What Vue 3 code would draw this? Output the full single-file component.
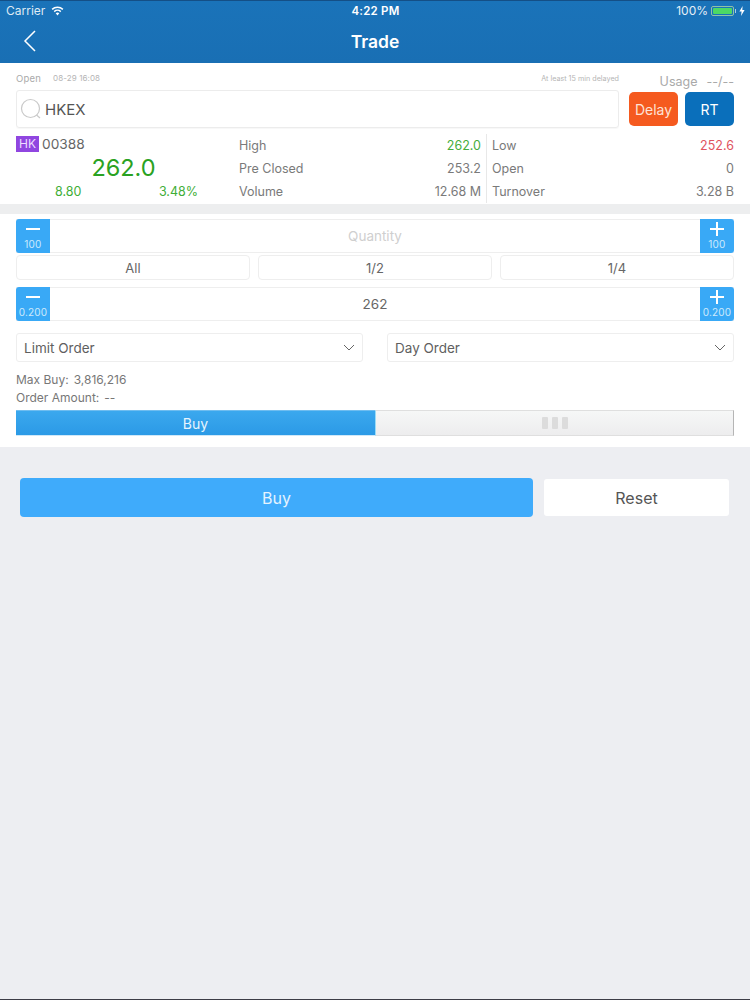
<script setup>
const stats = [
  [{ l: 'High', v: '262.0', c: 'up' }, { l: 'Low', v: '252.6', c: 'down' }],
  [{ l: 'Pre Closed', v: '253.2', c: '' }, { l: 'Open', v: '0', c: '' }],
  [{ l: 'Volume', v: '12.68 M', c: '' }, { l: 'Turnover', v: '3.28 B', c: '' }],
]
</script>

<template>
  <div class="page">
    <header class="top">
      <div class="status">
        <div class="st-left">
          <span>Carrier</span>
          <svg width="13" height="10" viewBox="0 0 15 11"><path d="M7.5 10.6 L9.6 8.1 A3.2 3.2 0 0 0 5.4 8.1 Z" fill="#fff"/><path d="M3.7 6.2 A5.6 5.6 0 0 1 11.3 6.2" fill="none" stroke="#fff" stroke-width="1.7"/><path d="M1.3 3.6 A9 9 0 0 1 13.7 3.6" fill="none" stroke="#fff" stroke-width="1.7"/></svg>
        </div>
        <div class="st-time">4:22 PM</div>
        <div class="st-right">
          <span>100%</span>
          <span class="batt"><i></i></span>
          <span class="nub"></span>
          <svg width="6" height="10" viewBox="0 0 6 10"><path d="M3.6 0 L0.4 5.6 H2.6 L2 10 L5.6 4 H3.3 Z" fill="#fff"/></svg>
        </div>
      </div>
      <div class="nav">
        <svg class="back" width="14" height="22" viewBox="0 0 14 22"><path d="M12 1 L2 11 L12 21" fill="none" stroke="#fff" stroke-width="1.5"/></svg>
        <div class="title">Trade</div>
      </div>
    </header>

    <section class="quote">
      <div class="search-col">
        <div class="meta">
          <span class="open">Open</span>
          <span class="tiny date">08-29 16:08</span>
          <span class="tiny delayed">At least 15 min delayed</span>
        </div>
        <div class="search">
          <svg width="22" height="22" viewBox="0 0 22 22"><circle cx="10.5" cy="10.5" r="9" fill="none" stroke="#c9c9c9" stroke-width="1.2"/><path d="M16.5 17 L20 20" stroke="#c9c9c9" stroke-width="1.2"/></svg>
          <span>HKEX</span>
        </div>
      </div>
      <div class="side-col">
        <div class="usage"><span>Usage</span><span>--/--</span></div>
        <div class="modes">
          <button class="mode delay">Delay</button>
          <button class="mode rt">RT</button>
        </div>
      </div>
    </section>

    <section class="prices">
      <div class="stock">
        <div class="code"><span class="tag">HK</span><span>00388</span></div>
        <div class="last">262.0</div>
        <div class="chg"><span>8.80</span><span>3.48%</span></div>
      </div>
      <div class="grid">
        <div v-for="(row, i) in stats" :key="i" class="grid-row">
          <div v-for="(cell, j) in row" :key="j" class="cell" :class="'col' + j">
            <span>{{ cell.l }}</span>
            <span :class="cell.c">{{ cell.v }}</span>
          </div>
        </div>
      </div>
    </section>

    <div class="sep"></div>

    <section class="form">
      <div class="stepper">
        <button class="step left"><span class="sym minus"></span><small>100</small></button>
        <div class="val placeholder">Quantity</div>
        <button class="step right"><span class="sym plus"></span><small>100</small></button>
      </div>
      <div class="fractions">
        <button>All</button>
        <button>1/2</button>
        <button>1/4</button>
      </div>
      <div class="stepper price">
        <button class="step left"><span class="sym minus"></span><small>0.200</small></button>
        <div class="val">262</div>
        <button class="step right"><span class="sym plus"></span><small>0.200</small></button>
      </div>
      <div class="selects">
        <div class="select first">
          <span>Limit Order</span>
          <svg width="12" height="7" viewBox="0 0 12 7"><path d="M1 1 L6 6 L11 1" fill="none" stroke="#666" stroke-width="1"/></svg>
        </div>
        <div class="select second">
          <span>Day Order</span>
          <svg width="12" height="7" viewBox="0 0 12 7"><path d="M1 1 L6 6 L11 1" fill="none" stroke="#666" stroke-width="1"/></svg>
        </div>
      </div>
      <div class="info">
        <div><span>Max Buy:</span><span>3,816,216</span></div>
        <div><span>Order Amount:</span><span>--</span></div>
      </div>
      <div class="toggle">
        <div class="t-buy">Buy</div>
        <div class="t-sell"><i></i><i></i><i></i></div>
      </div>
    </section>

    <div class="actions">
      <button class="buy">Buy</button>
      <button class="reset">Reset</button>
    </div>
  </div>
</template>

<style>
html, body { margin: 0; background: #edeef2; }
</style>

<style scoped>
.page {
  width: 750px;
  height: 1000px;
  box-sizing: border-box;
  border-bottom: 1px solid #3c3c46;
  background: #edeef2;
  font-family: Inter, "Liberation Sans", sans-serif;
  color: #666;
  overflow: hidden;
}
button { font-family: inherit; padding: 0; margin: 0; border: 0; }
.top {
  height: 63px;
  background: linear-gradient(#1a73b9, #196fb4);
  border-top: 1px solid #144f86;
  box-sizing: border-box;
  color: #fff;
}
.status {
  height: 19px;
  display: grid;
  grid-template-columns: 1fr auto 1fr;
  align-items: center;
  padding: 0 5px 0 6px;
  font-size: 12px;
}
.st-left { display: flex; align-items: center; gap: 6px; color: #dfeaf4; }
.st-time { font-weight: 600; font-size: 11.5px; letter-spacing: .2px; }
.st-right { display: flex; align-items: center; justify-content: flex-end; gap: 2px; color: #e6eff7; }
.batt { width: 19px; height: 6px; border: 1px solid #8fc3a6; border-radius: 2px; padding: 1px; box-sizing: content-box; display: block; margin-left: 1px; }
.batt i { display: block; width: 100%; height: 100%; background: #4cd964; border-radius: 1px; }
.nub { width: 1px; height: 4px; background: #a9cde4; margin: 0 1px 0 -1px; }
.nav { height: 43px; position: relative; display: flex; align-items: center; justify-content: center; }
.back { position: absolute; left: 23px; top: 10px; }
.title { font-size: 17.5px; font-weight: 600; margin-top: -1px; }

.quote {
  background: #fff;
  display: flex;
  padding: 7px 16px 0;
  height: 68px;
  box-sizing: border-box;
}
.search-col { width: 603px; }
.meta { display: flex; align-items: center; height: 16px; }
.open { font-size: 9.5px; color: #aaa; letter-spacing: .2px; }
.tiny { font-size: 8px; color: #b5b5b5; }
.date { margin-left: 12px; letter-spacing: .1px; }
.delayed { margin-left: auto; font-size: 7.2px; }
.search {
  margin-top: 4px;
  height: 38px;
  box-sizing: border-box;
  border: 1px solid #ececec;
  border-radius: 3px;
  display: flex;
  align-items: center;
  gap: 3px;
  padding-left: 3px;
  font-size: 15px;
  color: #555;
  box-shadow: 0 1px 1px rgba(0,0,0,.03);
}
.side-col { margin-left: 10px; width: 105px; }
.usage {
  display: flex;
  justify-content: flex-end;
  gap: 9px;
  height: 22px;
  align-items: center;
  font-size: 12.5px;
  color: #a9a9a9;
}
.modes { display: flex; justify-content: space-between; }
.mode { width: 49px; height: 34px; border-radius: 5px; color: #fff; font-size: 14px; }
.delay { background: #f55a1f; color: #fde3d6; }
.rt { background: #0a6fbb; }

.prices {
  background: #fff;
  height: 73px;
  display: flex;
  padding: 5px 16px 0;
  box-sizing: border-box;
}
.stock { width: 182px; flex: none; }
.code { display: flex; align-items: center; gap: 3px; font-size: 13.7px; height: 16px; color: #666; }
.tag { background: #9046e0; color: #eedcff; width: 23px; height: 16px; line-height: 16px; text-align: center; font-size: 12px; }
.last { color: #2aa222; font-size: 23.5px; text-align: center; line-height: 28px; margin-top: 2px; padding-left: 34px; width: 181px; box-sizing: border-box; }
.chg { display: flex; justify-content: space-between; color: #3fae37; font-size: 12.5px; padding-left: 39px; margin-top: 2px; line-height: 16px; }
.grid { margin-left: 41px; margin-top: -2px; flex: 1; display: flex; flex-direction: column; }
.grid-row { display: flex; height: 23px; align-items: center; }
.cell { display: flex; justify-content: space-between; font-size: 12.5px; color: #7a7a7a; }
.col0 { width: 248px; padding-right: 5px; box-sizing: border-box; border-right: 1px solid #e8e8e8; height: 23px; align-items: center; }
.col1 { flex: 1; padding-left: 5px; }
.up { color: #46ad3c; }
.down { color: #e0545f; }

.sep { height: 10px; background: #edeeef; }

.form {
  background: #fff;
  height: 233px;
  box-sizing: border-box;
  padding: 5px 16px 0;
}
.stepper {
  height: 34px;
  display: flex;
  border-top: 1px solid #eee;
  border-bottom: 1px solid #eee;
  box-sizing: border-box;
  align-items: center;
}
.val { flex: 1; text-align: center; font-size: 13.5px; color: #666; }
.placeholder { color: #cfcfcf; }
.step {
  width: 34px;
  height: 34px;
  background: #39a9f6;
  color: #cde9fc;
  display: flex;
  flex-direction: column;
  align-items: center;
  position: relative;
  flex: none;
}
.step.left { border-radius: 3px 0 0 3px; }
.step.right { border-radius: 0 3px 3px 0; }
.step small { font-size: 10px; position: absolute; bottom: 3px; line-height: 12px; letter-spacing: .2px; }
.sym { position: absolute; top: 3px; left: 10px; width: 14px; height: 14px; }
.sym::before { content: ""; position: absolute; left: 0; right: 0; top: 6px; height: 2px; background: #fff; }
.plus::after { content: ""; position: absolute; top: 0; bottom: 0; left: 6px; width: 2px; background: #fff; }
.fractions {
  display: grid;
  grid-template-columns: repeat(3, 234px);
  justify-content: space-between;
  margin-top: 2px;
}
.fractions button {
  height: 25px;
  background: #fff;
  border: 1px solid #eee;
  border-radius: 4px;
  font-size: 13px;
  color: #666;
  box-sizing: border-box;
}
.price { margin-top: 7px; }
.selects { display: flex; justify-content: space-between; margin-top: 12px; }
.select {
  height: 29px;
  box-sizing: border-box;
  border: 1px solid #eee;
  border-radius: 3px;
  display: flex;
  align-items: center;
  justify-content: space-between;
  padding: 0 7px;
  font-size: 13.5px;
  color: #5f5f5f;
}
.first { width: 347px; }
.second { width: 347px; }
.info { margin-top: 9px; font-size: 12px; color: #777; line-height: 17.5px; }
.info div { display: flex; gap: 5px; }
.toggle { display: flex; height: 26px; margin-top: 4px; }
.t-buy {
  width: 359px;
  background: linear-gradient(#3ba8ee 0%, #2b9ae6 100%);
  border-top: 1px solid #6fbdf0;
  border-bottom: 1px solid #cfe8f8;
  box-sizing: border-box;
  color: #e6f4fe;
  text-align: center;
  font-size: 14px;
  line-height: 26px;
}
.t-sell {
  flex: 1;
  background: linear-gradient(#f6f7f7, #ededee);
  border: 1px solid #dfdfdf;
  border-right-color: #b5b5b5;
  border-left-color: #9adcf7;
  box-sizing: border-box;
  display: flex;
  justify-content: center;
  gap: 4px;
  padding-top: 6px;
}
.t-sell i { display: block; width: 6px; height: 12px; background: #dcdcdc; border-radius: 1px; }

.actions {
  display: flex;
  align-items: center;
  padding: 31px 21px 0 20px;
  gap: 11px;
}
.buy {
  width: 513px;
  height: 39px;
  background: #3fabfb;
  color: #e4f3ff;
  font-size: 16px;
  border-radius: 4px;
}
.reset {
  flex: 1;
  height: 37px;
  background: #fff;
  color: #555;
  font-size: 16px;
  border-radius: 3px;
}
</style>
